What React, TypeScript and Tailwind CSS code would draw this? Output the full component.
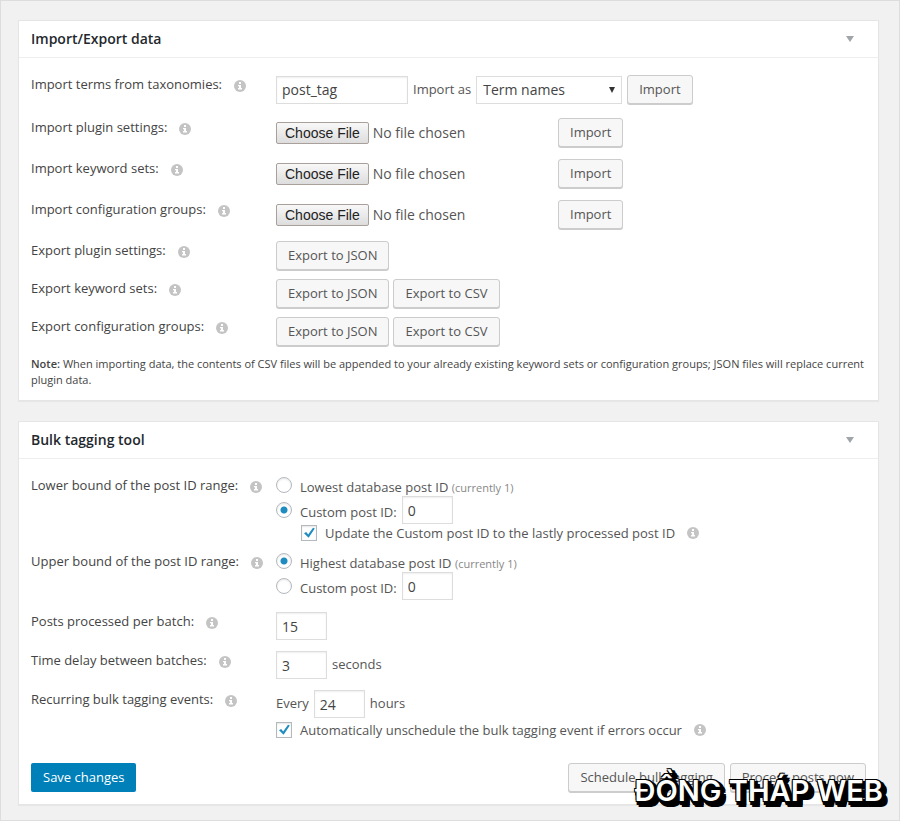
import { useState } from "react";
import type { ReactNode } from "react";

const buttonClass =
  "h-[29px] px-[11px] rounded-[3px] border border-[#cccccc] bg-[#f7f7f7] text-[13px] text-[#555555] shadow-[0_1px_0_#cccccc] cursor-pointer whitespace-nowrap";

const inputClass =
  "h-7 border border-[#dddddd] bg-white px-[5px] text-sm text-[#444444] shadow-[inset_0_1px_2px_rgba(0,0,0,0.07)]";

const radioClass =
  "appearance-none w-4 h-4 shrink-0 rounded-full border border-[#b4b9be] bg-white shadow-[inset_0_1px_2px_rgba(0,0,0,0.1)] checked:bg-[radial-gradient(circle,#1e8cbe_3px,#ffffff_4px)]";

const InfoIcon = () => (
  <svg viewBox="0 0 12 12" className="w-3 h-3 shrink-0" aria-hidden="true">
    <circle cx="6" cy="6" r="6" fill="#c4c4c4" />
    <path d="M5 2h2v2H5zM4 5h3v3h1v1.4H4V8h1V6.3H4z" fill="#ffffff" />
  </svg>
);

type PanelProps = {
  title: string;
  children: ReactNode;
};

const Panel = ({ title, children }: PanelProps) => (
  <section className="border border-[#e5e5e5] bg-white shadow-[0_1px_1px_rgba(0,0,0,0.04)]">
    <header className="flex h-9 items-center justify-between border-b border-[#eeeeee] pl-3 pr-6 box-content">
      <h2 className="text-sm font-semibold text-[#23282d]">{title}</h2>
      <button type="button" aria-label={`Toggle ${title}`}>
        <svg viewBox="0 0 8 6" className="w-2 h-1.5">
          <path d="M0 0h8L4 6z" fill="#a0a5aa" />
        </svg>
      </button>
    </header>
    {children}
  </section>
);

type RowProps = {
  label: string;
  htmlFor?: string;
  className?: string;
  children: ReactNode;
};

const Row = ({ label, htmlFor, className, children }: RowProps) => (
  <div className={`flex items-start ${className ?? ""}`}>
    <div className="flex w-[245px] shrink-0 items-center gap-3">
      <label htmlFor={htmlFor} className="leading-[18px] text-[#444444] whitespace-nowrap">
        {label}
      </label>
      <span className="pt-1">
        <InfoIcon />
      </span>
    </div>
    <div className="min-w-0 grow">{children}</div>
  </div>
);

const FileRow = ({ label, id }: { label: string; id: string }) => (
  <Row label={label} htmlFor={id} className="min-h-[41px]">
    <div className="flex items-center">
      <input
        id={id}
        type="file"
        className="w-[282px] text-sm text-[#555555] file:mr-1 file:h-[22px] file:rounded-[2px] file:border file:border-solid file:border-[#a9a09c] file:bg-linear-to-b file:from-[#f8f8f8] file:to-[#dddddd] file:px-2 file:font-['Liberation_Sans',sans-serif] file:text-sm file:leading-5 file:text-[#222222]"
      />
      <button type="button" className={buttonClass}>
        Import
      </button>
    </div>
  </Row>
);

type CheckProps = {
  label: string;
  checked: boolean;
  onChange: (checked: boolean) => void;
};

const Check = ({ label, checked, onChange }: CheckProps) => (
  <div className="flex items-center gap-3">
    <label className="flex items-center gap-2">
      <span className="relative h-4 w-4 shrink-0">
        <input
          type="checkbox"
          checked={checked}
          onChange={(e) => onChange(e.target.checked)}
          className="block h-4 w-4 appearance-none border border-[#b4b9be] bg-white shadow-[inset_0_1px_2px_rgba(0,0,0,0.1)]"
        />
        {checked && (
          <svg viewBox="0 0 16 16" className="pointer-events-none absolute inset-0 h-4 w-4">
            <path d="M3 8.2L5.2 7l2 2.4L12 2.8l1.8.8L7.6 12.8z" fill="#1e8cbe" />
          </svg>
        )}
      </span>
      <span className="leading-[18px]">{label}</span>
    </label>
    <InfoIcon />
  </div>
);

type Bound = "database" | "custom";

type BoundFieldProps = {
  name: string;
  label: string;
  value: Bound;
  onChange: (value: Bound) => void;
};

const BoundField = ({ name, label, value, onChange }: BoundFieldProps) => (
  <>
    <label className="flex h-[18px] items-center gap-2">
      <input
        type="radio"
        name={name}
        checked={value === "database"}
        onChange={() => onChange("database")}
        className={radioClass}
      />
      <span className="pt-1 leading-[18px]">
        {label} <span className="text-[11px] text-[#888888]">(currently 1)</span>
      </span>
    </label>
    <div className="flex items-center gap-[5px] pt-0.5">
      <label className="flex items-center gap-2">
        <input
          type="radio"
          name={name}
          checked={value === "custom"}
          onChange={() => onChange("custom")}
          className={radioClass}
        />
        <span className="pt-1 leading-[18px]">Custom post ID:</span>
      </label>
      <input
        type="text"
        defaultValue="0"
        aria-label={`${label} custom value`}
        className={`${inputClass} w-[51px]`}
      />
    </div>
  </>
);

const App = () => {
  const [lower, setLower] = useState<Bound>("custom");
  const [upper, setUpper] = useState<Bound>("database");
  const [updateLast, setUpdateLast] = useState(true);
  const [unschedule, setUnschedule] = useState(true);

  return (
    <div className="relative flex min-h-screen flex-col gap-5 border border-[#dddddd] bg-[#f1f1f1] pt-[19px] pr-5 pb-[14px] pl-[17px] font-['Open_Sans',sans-serif] text-[13px] text-[#555555]">
      <Panel title="Import/Export data">
        <div className="px-3 pt-[17px] pb-3">
          <Row label="Import terms from taxonomies:" htmlFor="taxonomies" className="min-h-[43px]">
            <div className="flex items-center gap-[5px]">
              <input
                id="taxonomies"
                type="text"
                defaultValue="post_tag"
                className={`${inputClass} w-[132px]`}
              />
              <label htmlFor="import-as">Import as</label>
              <div className="relative">
                <select
                  id="import-as"
                  className="block h-7 w-[146px] appearance-none border border-[#dddddd] bg-white px-[6px] text-sm text-[#444444]"
                >
                  <option>Term names</option>
                  <option>Term slugs</option>
                </select>
                <svg
                  viewBox="0 0 6 6"
                  className="pointer-events-none absolute top-[11px] right-[7px] h-1.5 w-1.5"
                >
                  <path d="M0 0h6L3 6z" fill="#333333" />
                </svg>
              </div>
              <button type="button" className={buttonClass}>
                Import
              </button>
            </div>
          </Row>
          <FileRow label="Import plugin settings:" id="plugin-settings" />
          <FileRow label="Import keyword sets:" id="keyword-sets" />
          <FileRow label="Import configuration groups:" id="configuration-groups" />
          <Row label="Export plugin settings:" className="min-h-[38px]">
            <button type="button" className={buttonClass}>
              Export to JSON
            </button>
          </Row>
          {["Export keyword sets:", "Export configuration groups:"].map((label) => (
            <Row key={label} label={label} className="min-h-[38px]">
              <div className="flex gap-1">
                <button type="button" className={buttonClass}>
                  Export to JSON
                </button>
                <button type="button" className={buttonClass}>
                  Export to CSV
                </button>
              </div>
            </Row>
          ))}
          <p className="pt-px text-[11px] leading-4 text-[#444444]">
            <strong className="font-semibold">Note:</strong> When importing data, the contents of
            CSV files will be appended to your already existing keyword sets or configuration
            groups; JSON files will replace current plugin data.
          </p>
        </div>
      </Panel>

      <Panel title="Bulk tagging tool">
        <div className="px-3 pt-[17px] pb-3">
          <Row label="Lower bound of the post ID range:" className="min-h-[76px]">
            <BoundField
              name="lower"
              label="Lowest database post ID"
              value={lower}
              onChange={setLower}
            />
            <div className="pl-[25px]">
              <Check
                label="Update the Custom post ID to the lastly processed post ID"
                checked={updateLast}
                onChange={setUpdateLast}
              />
            </div>
          </Row>
          <Row label="Upper bound of the post ID range:" className="min-h-[60px]">
            <BoundField
              name="upper"
              label="Highest database post ID"
              value={upper}
              onChange={setUpper}
            />
          </Row>
          <Row label="Posts processed per batch:" htmlFor="batch" className="min-h-[39px]">
            <input
              id="batch"
              type="text"
              defaultValue="15"
              className={`${inputClass} block w-[51px]`}
            />
          </Row>
          <Row label="Time delay between batches:" htmlFor="delay" className="min-h-[39px]">
            <div className="flex items-center gap-[5px]">
              <input id="delay" type="text" defaultValue="3" className={`${inputClass} w-[51px]`} />
              <span>seconds</span>
            </div>
          </Row>
          <Row label="Recurring bulk tagging events:" htmlFor="recurring" className="min-h-[73px]">
            <div className="flex items-center gap-[5px]">
              <span>Every</span>
              <input
                id="recurring"
                type="text"
                defaultValue="24"
                className={`${inputClass} w-[51px]`}
              />
              <span>hours</span>
            </div>
            <div className="pt-[3px]">
              <Check
                label="Automatically unschedule the bulk tagging event if errors occur"
                checked={unschedule}
                onChange={setUnschedule}
              />
            </div>
          </Row>
          <div className="flex items-center justify-between">
            <button
              type="button"
              className="h-[29px] rounded-[2px] bg-[#0080b8] px-3 text-[13px] text-white cursor-pointer"
            >
              Save changes
            </button>
            <div className="flex gap-[5px]">
              <button type="button" className={buttonClass}>
                Schedule bulk tagging
              </button>
              <button type="button" className={buttonClass}>
                Process posts now
              </button>
            </div>
          </div>
        </div>
      </Panel>

      <div className="pointer-events-none absolute right-[16px] bottom-[9px] font-['Inter',sans-serif] text-[29px] leading-10 font-semibold whitespace-nowrap text-white [text-shadow:-1px_-1px_0_#000,1px_-1px_0_#000,-1px_1px_0_#000,1px_1px_0_#000,2px_2px_0_#000,3px_3px_0_#000,4px_4px_0_#000,5px_5px_0_#000,6px_6px_0_#000,0px_4px_0_#000,2px_6px_0_#000,4px_6px_0_#000,6px_4px_0_#000,4px_1px_0_#000]">
        ĐỒNG THÁP WEB
      </div>
    </div>
  );
};

export default App;
